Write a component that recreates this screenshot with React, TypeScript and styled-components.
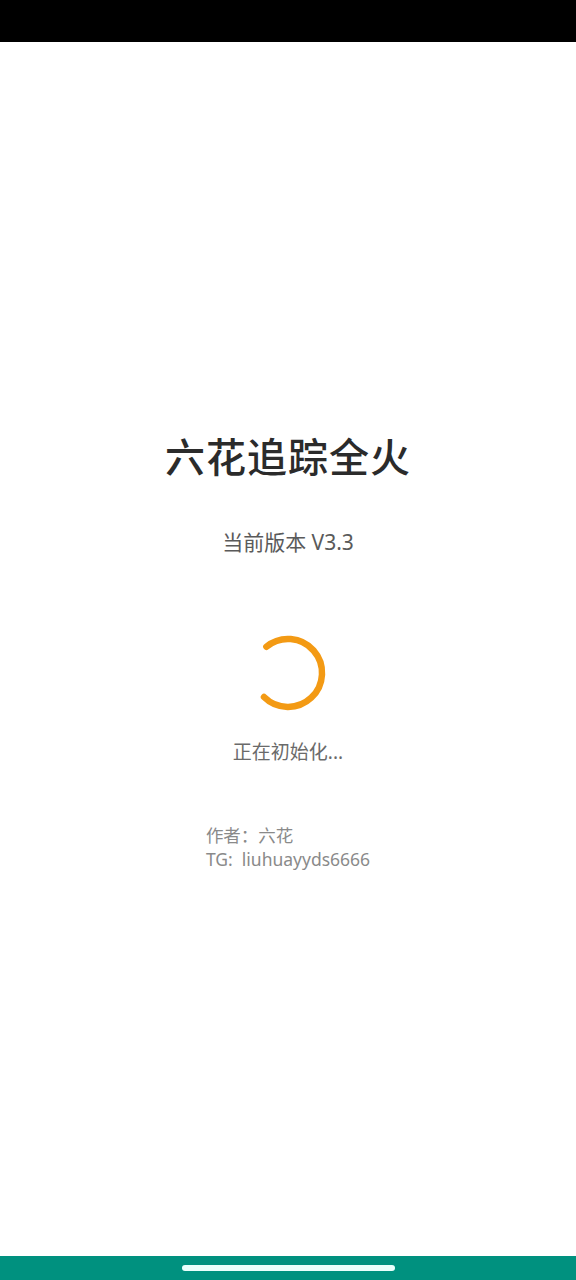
import styled, { createGlobalStyle } from 'styled-components'

const GlobalStyle = createGlobalStyle`
	html, body {
		margin: 0;
		padding: 0;
		background: #ffffff;
	}
	body {
		font-family: 'Noto Sans', 'Noto Sans CJK SC', sans-serif;
	}
`

const Page = styled.div`
	display: flex;
	flex-direction: column;
	width: 576px;
	height: 1280px;
	overflow: hidden;
`

const StatusBar = styled.div`
	height: 42px;
	background-color: #000000;
	flex-shrink: 0;
`

const Main = styled.main`
	flex: 1;
	display: flex;
	flex-direction: column;
	align-items: center;
	padding-top: 391px;
`

const Title = styled.h1`
	margin: 0;
	font-size: 40px;
	line-height: 48px;
	font-weight: 500;
	color: #2b2b2b;
	letter-spacing: 1px;
`

const Version = styled.p`
	margin: 47px 0 0;
	font-size: 21px;
	line-height: 28px;
	color: #5a5a5a;
`

const Spinner = styled.svg`
	margin-top: 77px;
	width: 80px;
	height: 80px;
`

const Loading = styled.p`
	margin: 27px 0 0;
	font-size: 19px;
	line-height: 24px;
	color: #6a6a6a;
`

const Credits = styled.div`
	margin-top: 59px;
	display: flex;
	flex-direction: column;
	font-size: 17.5px;
	line-height: 24px;
	color: #8a8a8a;
`

const NavBar = styled.div`
	height: 24px;
	background-color: #00917f;
	flex-shrink: 0;
	display: flex;
	justify-content: center;
	padding-top: 9px;
	box-sizing: border-box;
`

const Handle = styled.div`
	width: 213px;
	height: 6px;
	border-radius: 3px;
	background-color: #eafffc;
`

const App = () => {
	return (
		<>
			<GlobalStyle />
			<Page>
				<StatusBar />
				<Main>
					<Title>六花追踪全火</Title>
					<Version>当前版本 V3.3</Version>
					<Spinner viewBox='0 0 80 80'>
						<path
							d='M 18.4 13.7 A 34 34 0 1 1 16 64'
							fill='none'
							stroke='#f39a14'
							strokeWidth='6.5'
							strokeLinecap='round'
						/>
					</Spinner>
					<Loading>正在初始化...</Loading>
					<Credits>
						<span>作者：六花</span>
						<span>TG:&nbsp;&nbsp;liuhuayyds6666</span>
					</Credits>
				</Main>
				<NavBar><Handle /></NavBar>
			</Page>
		</>
	)
}

export default App
